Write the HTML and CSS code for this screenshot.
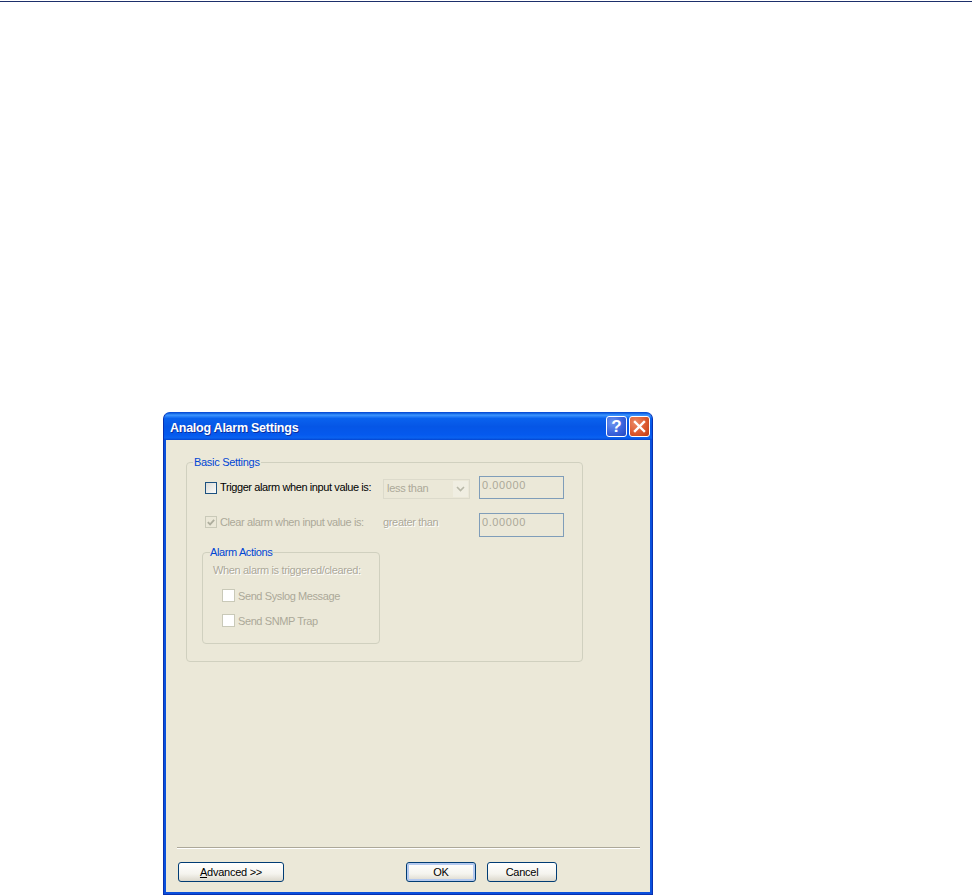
FILE: index.html
```html
<!DOCTYPE html>
<html lang="en">
<head>
<meta charset="utf-8">
<title>Analog Alarm Settings</title>
<link rel="stylesheet" href="styles.css">
</head>
<body>
<div class="top-rule"></div>
<div class="window">
  <div class="titlebar">
    <span class="title">Analog Alarm Settings</span>
    <div class="caption-buttons">
      <span class="cap cap-help">?</span>
      <span class="cap cap-close">
        <svg width="13" height="13" viewBox="0 0 13 13"><path d="M2 2 L11 11 M11 2 L2 11" stroke="#fff" stroke-width="2.4" stroke-linecap="square" fill="none"/></svg>
      </span>
    </div>
  </div>
  <div class="client">
    <div class="content">
      <fieldset class="group basic">
        <legend>Basic Settings</legend>
        <div class="row row-one">
          <span class="check check-active"></span>
          <span class="label label-active">Trigger alarm when input value is:</span>
          <span class="select">
            <span class="select-text">less than</span>
            <span class="select-arrow">
              <svg width="9" height="6" viewBox="0 0 9 6"><path d="M1 1 L4.5 4.5 L8 1" stroke="#b8b8a8" stroke-width="1.6" fill="none"/></svg>
            </span>
          </span>
          <span class="field">0.00000</span>
        </div>
        <div class="row row-two">
          <span class="check check-disabled">
            <svg width="11" height="11" viewBox="0 0 11 11"><path d="M2 5 L4.5 7.5 L9 2.5" stroke="#aeae9e" stroke-width="2" fill="none"/></svg>
          </span>
          <span class="label label-disabled label-clear">Clear alarm when input value is:</span>
          <span class="static">greater than</span>
          <span class="field">0.00000</span>
        </div>
        <fieldset class="group actions">
          <legend>Alarm Actions</legend>
          <div class="hint">When alarm is triggered/cleared:</div>
          <div class="action-row">
            <span class="check check-blank"></span>
            <span class="label label-disabled">Send Syslog Message</span>
          </div>
          <div class="action-row">
            <span class="check check-blank"></span>
            <span class="label label-disabled">Send SNMP Trap</span>
          </div>
        </fieldset>
      </fieldset>
    </div>
    <div class="footer">
      <div class="separator"></div>
      <div class="buttons">
        <button class="btn btn-advanced" type="button"><u>A</u>dvanced &gt;&gt;</button>
        <div class="buttons-right">
          <button class="btn btn-default" type="button">OK</button>
          <button class="btn" type="button">Cancel</button>
        </div>
      </div>
    </div>
  </div>
</div>
</body>
</html>
```
FILE: styles.css
```css
html, body {
  margin: 0;
  padding: 0;
  background: #fff;
}
body {
  width: 973px;
  height: 895px;
  overflow: hidden;
  position: relative;
  font-family: "Liberation Sans", Arial, sans-serif;
  font-size: 11px;
}
.top-rule {
  height: 1px;
  margin-top: 1px;
  width: 972px;
  background: #1d2f6b;
}
.window {
  position: absolute;
  left: 163px;
  top: 412px;
  width: 490px;
  height: 483px;
  box-sizing: border-box;
  display: flex;
  flex-direction: column;
  background: #0a50dc;
  border-radius: 7px 7px 0 0;
  border: 1px solid #0831b0;
  border-top-color: #0a4fd8;
  overflow: hidden;
}
.titlebar {
  height: 27px;
  flex: none;
  display: flex;
  align-items: center;
  justify-content: space-between;
  padding: 0 2px 0 6px;
  background: linear-gradient(180deg, #0a5bdc 0%, #3d95ff 8%, #0a62ee 20%, #0556e6 50%, #0559ee 80%, #0a62f0 92%, #0445d0 100%);
}
.title {
  color: #fff;
  font-weight: bold;
  font-size: 12.5px;
  letter-spacing: -0.25px;
  line-height: 14px;
  padding-top: 2px;
  text-shadow: 1px 1px 0 #0a2f9e;
}
.caption-buttons {
  display: flex;
  gap: 2px;
}
.cap {
  width: 21px;
  height: 21px;
  box-sizing: border-box;
  border: 1px solid #fff;
  border-radius: 3px;
  display: flex;
  align-items: center;
  justify-content: center;
  color: #fff;
}
.cap-help {
  background: radial-gradient(circle at 30% 30%, #6e96f0 0%, #3b63dd 55%, #2247c0 100%);
  font-size: 17px;
  font-weight: bold;
}
.cap-close {
  background: radial-gradient(circle at 30% 30%, #ec8a66 0%, #dc5a30 55%, #bf3a12 100%);
}
.client {
  flex: 1;
  margin: 0 2px 2px;
  background: #ebe8d8;
  display: flex;
  flex-direction: column;
  color: #000;
}
.content {
  flex: 1;
  padding: 16px 0 0 20px;
}
.group {
  margin: 0;
  padding: 0;
  border: 1px solid #d0d0bf;
  border-radius: 4px;
  box-sizing: border-box;
  min-width: 0;
}
.group legend {
  color: #0046d5;
  padding: 0 1px;
  line-height: 13px;
}
.basic {
  width: 397px;
  height: 206px;
  padding: 0 0 0 18px;
}
.basic > legend {
  margin-left: -12px;
  letter-spacing: -0.29px;
}
.row {
  display: flex;
  align-items: center;
  height: 24px;
}
.row-one {
  margin-top: 7px;
}
.row-two {
  margin-top: 13px;
  align-items: flex-start;
}
.row-two .check,
.row-two .label,
.row-two .static {
  margin-top: 3px;
}
.check {
  flex: none;
  box-sizing: border-box;
  display: inline-flex;
  align-items: center;
  justify-content: center;
}
.check-active {
  width: 12px;
  height: 12px;
  border: 1px solid #1c5180;
  background: linear-gradient(135deg, #dcdcd7, #fbfbf9);
}
.check-disabled {
  width: 12px;
  height: 12px;
  border: 1px solid #c9c9b8;
  background: #ebe8d8;
}
.check-blank {
  width: 13px;
  height: 13px;
  border: 1px solid #c9c9b8;
  background: #fff;
}
.label {
  margin-left: 3px;
  letter-spacing: -0.4px;
  white-space: nowrap;
}
.label-active {
  color: #000;
  width: 163px;
  padding-bottom: 2px;
}
.label-disabled {
  color: #aca899;
}
.label-clear {
  width: 163px;
}
.select {
  width: 87px;
  height: 20px;
  box-sizing: border-box;
  border: 1px solid #dcdacb;
  background: #ebe8d8;
  display: flex;
  align-items: center;
  justify-content: space-between;
  color: #aca899;
  margin: 1px 9px 0 0;
}
.select-text {
  padding: 0 0 2px 3px;
  letter-spacing: -0.3px;
}
.select-arrow {
  width: 15px;
  height: 16px;
  margin-right: 1px;
  background: #f0eee2;
  display: flex;
  align-items: center;
  justify-content: center;
}
.static {
  width: 96px;
  color: #aca899;
  letter-spacing: -0.33px;
  white-space: nowrap;
  text-shadow: 1px 1px 0 #fff;
}
.field {
  width: 85px;
  height: 24px;
  box-sizing: border-box;
  border: 1px solid #7f9db9;
  color: #aca899;
  padding: 2px 0 0 2px;
  letter-spacing: 0.6px;
}
.row-one .field {
  height: 23px;
  align-self: flex-start;
}
.actions {
  width: 178px;
  height: 98px;
  margin: 9px 0 0 -3px;
  padding: 0 0 0 10px;
}
.actions > legend {
  margin-left: -3px;
  padding: 0;
  letter-spacing: -0.38px;
}
.hint {
  color: #aca899;
  letter-spacing: -0.35px;
  white-space: nowrap;
  text-shadow: 1px 1px 0 #fff;
  line-height: 13px;
  margin-top: 5px;
}
.action-row {
  display: flex;
  align-items: center;
  height: 13px;
  margin: 12px 0 0 9px;
}
.footer {
  flex: none;
  padding: 0 10px 10px 11px;
}
.separator {
  height: 1px;
  background: #aca899;
  border-bottom: 1px solid #fff;
}
.buttons {
  display: flex;
  justify-content: space-between;
  margin-top: 13px;
  padding: 0 83px 0 1px;
}
.buttons-right {
  display: flex;
  gap: 11px;
}
.btn {
  width: 70px;
  height: 20px;
  box-sizing: border-box;
  padding: 0;
  border: 1px solid #003c74;
  border-radius: 3px;
  background: linear-gradient(180deg, #fff 0%, #f5f4ee 60%, #dcd8cc 100%);
  font: 11px "Liberation Sans", Arial, sans-serif;
  letter-spacing: -0.25px;
  color: #000;
}
.btn-advanced {
  width: 106px;
}
.btn-default {
  box-shadow: inset 0 0 0 2px #b4c9ef;
}
```
